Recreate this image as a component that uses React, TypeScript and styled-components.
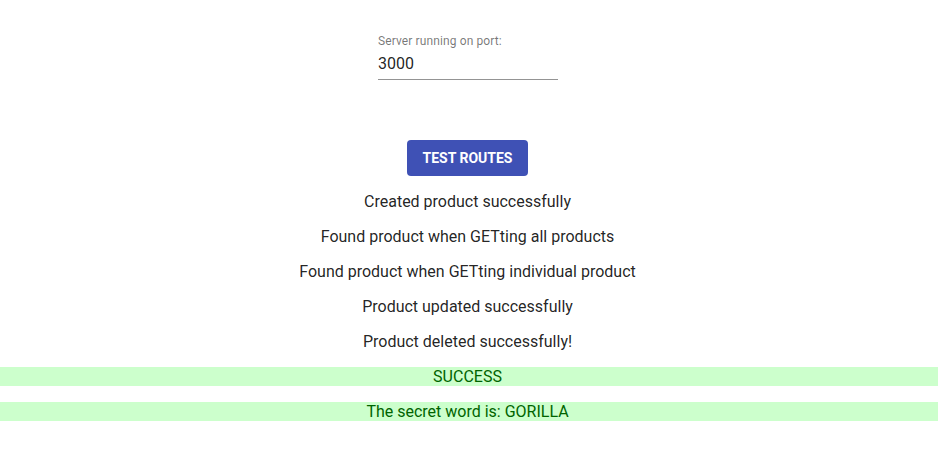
import React from "react";
import styled, { createGlobalStyle } from "styled-components";

const GlobalStyle = createGlobalStyle`
	body {
		margin: 0;
		background: #fff;
		font-family: Roboto, "Helvetica Neue", Arial, sans-serif;
	}
`;

const Page = styled.div`
	display: flex;
	flex-direction: column;
	align-items: center;
	padding-top: 34px;
	text-align: center;
`;

const Field = styled.div`
	display: flex;
	flex-direction: column;
	width: 180px;
	margin-right: 2px;
	text-align: left;
	margin-bottom: 60px;
`;

const Label = styled.label`
	font-size: 12px;
	line-height: 14px;
	color: rgba(0, 0, 0, 0.54);
	letter-spacing: 0.00938em;
`;

const Input = styled.input`
	font-family: inherit;
	font-size: 16px;
	line-height: 19px;
	height: 19px;
	padding: 6px 0 6px;
	margin: 0;
	border: none;
	border-bottom: 1px solid rgba(0, 0, 0, 0.42);
	outline: none;
	color: rgba(0, 0, 0, 0.87);
	background: transparent;
`;

const Button = styled.button`
	font-family: inherit;
	font-size: 14px;
	font-weight: 700;
	text-transform: uppercase;
	line-height: 24px;
	padding: 6px 16px;
	margin-right: 3px;
	border: none;
	border-radius: 4px;
	background-color: #3f51b5;
	color: #fff;
	cursor: pointer;
`;

const Results = styled.div`
	width: 100%;
	display: flex;
	flex-direction: column;
	margin-top: 16px;
`;

interface LineProps {
	success?: boolean;
}

const Line = styled.p<LineProps>`
	margin: 0 0 16px;
	padding-right: 3px;
	font-size: 16px;
	line-height: 19px;
	color: ${(props) => (props.success ? "#006400" : "rgba(0, 0, 0, 0.87)")};
	background: ${(props) => (props.success ? "#ccffcc" : "transparent")};
`;

const messages = [
	"Created product successfully",
	"Found product when GETting all products",
	"Found product when GETting individual product",
	"Product updated successfully",
	"Product deleted successfully!",
];

const App = () => {
	return (
		<>
			<GlobalStyle />
			<Page>
				<Field>
					<Label htmlFor="port">Server running on port:</Label>
					<Input id="port" type="text" defaultValue="3000" />
				</Field>
				<Button>Test routes</Button>
				<Results>
					{messages.map((m) => (
						<Line key={m}>{m}</Line>
					))}
					<Line success>SUCCESS</Line>
					<Line success>The secret word is: GORILLA</Line>
				</Results>
			</Page>
		</>
	);
};

export default App;
